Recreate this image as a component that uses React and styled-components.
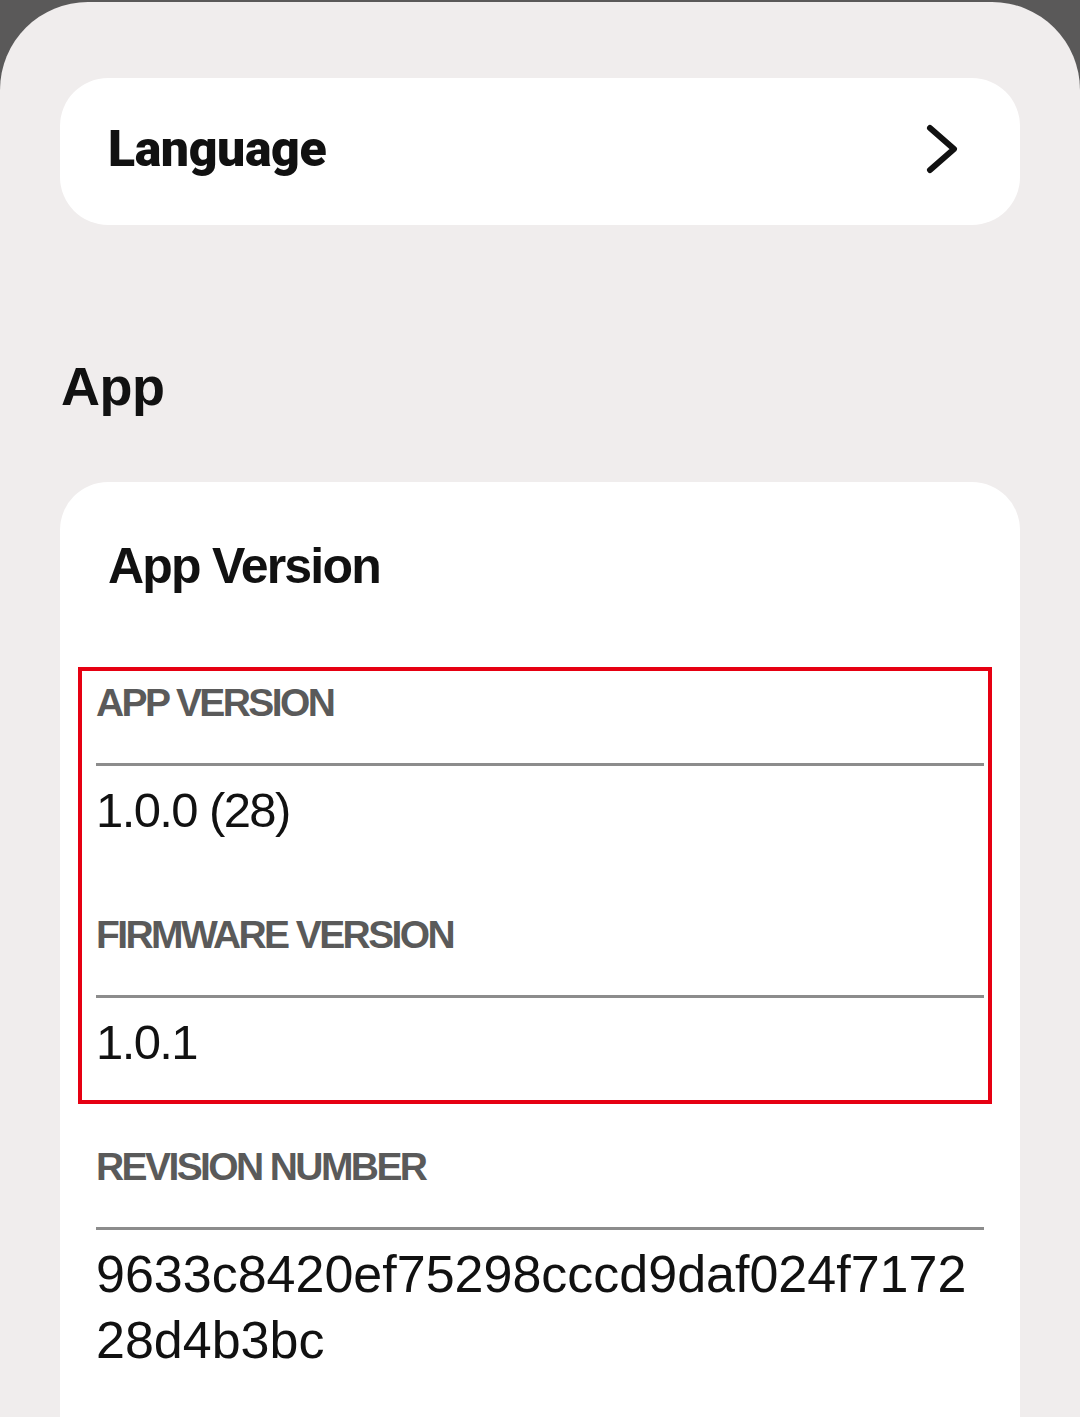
import React from 'react'
import styled, { createGlobalStyle } from 'styled-components'

const GlobalStyle = createGlobalStyle`
  html, body {
    margin: 0;
    padding: 0;
    background: #5a5959;
  }
  * {
    box-sizing: border-box;
  }
`

const Screen = styled.div`
  margin-top: 2px;
  min-height: 1415px;
  background: #f0eded;
  border-radius: 88px 88px 0 0;
  padding: 76px 60px 0;
  font-family: "Liberation Sans", Arial, sans-serif;
  color: #111;
  overflow: hidden;
`

const LinkCard = styled.div`
  height: 147px;
  background: #fff;
  border-radius: 48px;
  display: flex;
  align-items: center;
  justify-content: space-between;
  padding: 0 60px 6px 48px;
`

const LinkLabel = styled.span`
  font-family: Roboto, "Liberation Sans", sans-serif;
  font-weight: 900;
  font-size: 50px;
  letter-spacing: -0.4px;
  line-height: 1;
`

const SectionTitle = styled.h2`
  margin: 131px 0 0 1px;
  font-size: 54px;
  line-height: 60px;
  font-weight: 700;
  letter-spacing: -0.5px;
`

const Card = styled.div`
  margin-top: 66px;
  background: #fff;
  border-radius: 48px;
  padding: 54px 36px 120px;
`

const CardTitle = styled.h3`
  margin: 0 0 83px 12px;
  font-size: 50px;
  line-height: 60px;
  font-weight: 700;
  letter-spacing: -1.8px;
`

const List = styled.div`
  display: flex;
  flex-direction: column;
  gap: 68px;
`

// red outline drawn around a group of rows
const Highlight = styled.div`
  position: relative;
  display: flex;
  flex-direction: column;
  gap: 68px;

  &::after {
    content: "";
    position: absolute;
    top: -12px;
    left: -18px;
    right: -8px;
    bottom: -29px;
    border: 4px solid #e60012;
    pointer-events: none;
  }
`

const Row = styled.div`
  display: flex;
  flex-direction: column;
`

const Label = styled.div`
  font-size: 39px;
  line-height: 48px;
  font-weight: 700;
  letter-spacing: -2.6px;
  color: #5a5a5a;
  text-transform: uppercase;
`

const Divider = styled.div`
  height: 3px;
  margin-top: 36px;
  background: #8c8c8c;
`

const Value = styled.div`
  margin-top: 11px;
  font-size: ${p => (p.$long ? '52px' : '49px')};
  letter-spacing: ${p => (p.$long ? '0' : '-1.6px')};
  line-height: 66px;
  color: #111;
  word-break: break-all;
`

const Chevron = () => (
  <svg width="36" height="54" viewBox="0 0 36 54" fill="none">
    <polyline
      points="6,6 30,27 6,48"
      stroke="#111"
      strokeWidth="6"
      strokeLinecap="round"
      strokeLinejoin="round"
    />
  </svg>
)

const InfoRow = ({ label, value, long }) => (
  <Row>
    <Label>{label}</Label>
    <Divider />
    <Value $long={long}>{value}</Value>
  </Row>
)

const App = () => {
  return (
    <>
      <GlobalStyle />
      <Screen>
        <LinkCard>
          <LinkLabel>Language</LinkLabel>
          <Chevron />
        </LinkCard>

        <SectionTitle>App</SectionTitle>

        <Card>
          <CardTitle>App Version</CardTitle>
          <List>
            <Highlight>
              <InfoRow label="App Version" value="1.0.0 (28)" />
              <InfoRow label="Firmware Version" value="1.0.1" />
            </Highlight>
            <InfoRow
              label="Revision Number"
              value="9633c8420ef75298cccd9daf024f717228d4b3bc"
              long
            />
          </List>
        </Card>
      </Screen>
    </>
  )
}

export default App
